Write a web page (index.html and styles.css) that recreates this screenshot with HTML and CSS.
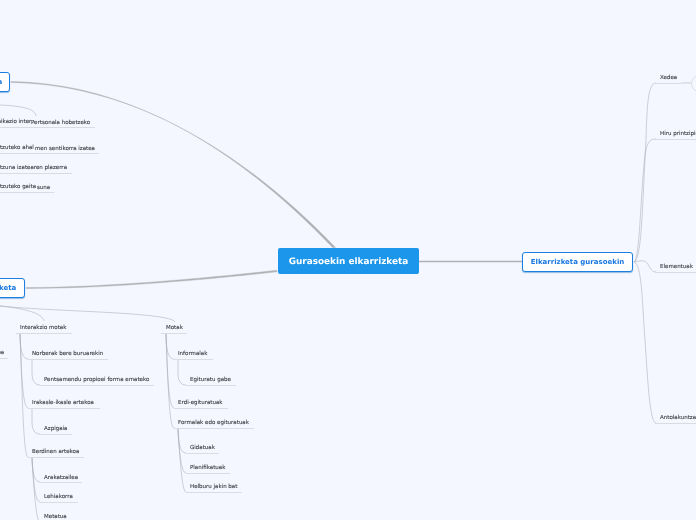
FILE: index.html
```html
<!DOCTYPE html>
<html lang="eu">
<head>
<meta charset="utf-8">
<title>Gurasoekin elkarrizketa</title>
<link rel="stylesheet" href="styles.css">
</head>
<body>
<main class="map">
<svg class="links" width="696" height="520" viewBox="0 0 696 520" aria-hidden="true">
  <g class="main-links">
    <path d="M332.500 247.500C260 172 150 83.500 11 81.500V82.500C150 84.600 262 171 335.500 247.500Z"/>
    <path d="M277 270.200C200 279 100 287.500 26 287.600V288.400C100 288.800 200 280.500 277 271.800Z"/>
    <path d="M419 260.900H522V262.100H419Z"/>
  </g>
  <g class="branches">
    <path d="M634 262C642 258 642 210 646 140C647 105 648 83 656 83"/>
    <path d="M634 262C640 258 640 200 645 155C647 143 649 139 656 139"/>
    <path d="M634 262C643 260 646 260 649 266C651 270 653 272 656 272"/>
    <path d="M634 262C642 265 642 300 645 340C648 385 650 423 656 423"/>
    <path d="M0 306C20 308 42 312 44 321"/>
    <path d="M0 306C60 312 170 312 175 322"/>
    <path d="M0 105C20 106 35 108 36 116"/>
    <path d="M20 333C20 345 21 359 28 359"/>
    <path d="M20 333C21 360 22 408 28 408"/>
    <path d="M20 333C22 380 23 457 28 457"/>
    <path d="M32 359V372C32 380 34 385 40 385"/>
    <path d="M32 408V421C32 429 34 434 40 434"/>
    <path d="M32 457C32 470 34 482 40 482"/>
    <path d="M32 457C33 480 35 502 40 502"/>
    <path d="M32 457C34 490 36 522 40 522"/>
    <path d="M166 333C166 345 167 359 174 359"/>
    <path d="M166 333C167 365 168 408 174 408"/>
    <path d="M166 333C168 380 169 428 174 428"/>
    <path d="M178 359V372C178 380 180 385 186 385"/>
    <path d="M178 428C178 442 180 453 186 453"/>
    <path d="M178 428C179 450 181 473 186 473"/>
    <path d="M178 428C180 460 182 492 186 492"/>
    <path d="M691 83H681"/>
  </g>
  <g class="rules">
    <path d="M0 127.500H95"/>
    <path d="M0 153.500H99"/>
    <path d="M0 173.500H72"/>
    <path d="M0 192.500H54"/>
    <path d="M0 358.500H8"/>
    <path d="M16 333.500H72"/>
    <path d="M28 359.500H108"/>
    <path d="M40 385.500H154"/>
    <path d="M28 408.500H100"/>
    <path d="M40 434.500H72"/>
    <path d="M28 457.500H84"/>
    <path d="M40 482.500H82"/>
    <path d="M40 502.500H78"/>
    <path d="M161 333.500H187"/>
    <path d="M174 359.500H213"/>
    <path d="M186 385.500H236"/>
    <path d="M174 408.500H228"/>
    <path d="M174 428.500H254"/>
    <path d="M186 453.500H219"/>
    <path d="M186 473.500H230"/>
    <path d="M186 492.500H242"/>
    <path d="M655 83.500H681"/>
    <path d="M655 139.500H696"/>
    <path d="M655 272.500H696"/>
    <path d="M655 423.500H696"/>
  </g>
  <circle class="fold" cx="700" cy="83.500" r="8.500"/>
</svg>

<div class="root">Gurasoekin elkarrizketa</div>
<div class="topic t-right">Elkarrizketa gurasoekin</div>
<div class="topic t-top">Komunikazioa</div>
<div class="topic t-bottom">Elkarrizketa</div>

<span class="lbl e1">Komunikazio inter</span>
<span class="lbl e2">Entzuteko ahal</span>
<span class="lbl e3">Entzuna izatearen plazerra</span>
<span class="lbl e4">Entzuteko gaita</span>
<span class="lbl e5">Bestelakoa</span>
<span class="lbl a1">Pertsonala hobetzeko</span>
<span class="lbl a2">men sentikorra izatea</span>
<span class="lbl a3">suna</span>

<span class="lbl b0">Interakzio motak</span>
<span class="lbl b1">Norberak bere buruarekin</span>
<span class="lbl b2">Pentsamendu propioei forma emateko</span>
<span class="lbl b3">Irakasle-ikasle artekoa</span>
<span class="lbl b4">Azpigaia</span>
<span class="lbl b5">Berdinen artekoa</span>
<span class="lbl b6">Arakatzailea</span>
<span class="lbl b7">Lehiakorra</span>
<span class="lbl b8">Metatua</span>

<span class="lbl c0">Motak</span>
<span class="lbl c1">Informalak</span>
<span class="lbl c2">Egituratu gabe</span>
<span class="lbl c3">Erdi-egituratuak</span>
<span class="lbl c4">Formalak edo egituratuak</span>
<span class="lbl c5">Gidatuak</span>
<span class="lbl c6">Planifikatuak</span>
<span class="lbl c7">Helburu jakin bat</span>

<span class="lbl d1">Xedea</span>
<span class="lbl d2">Hiru printzipio</span>
<span class="lbl d3">Elementuak</span>
<span class="lbl d4">Antolakuntza</span>
</main>
</body>
</html>
```
FILE: styles.css
```css
html, body { margin: 0; padding: 0; background: #f4f7ff; }
.map { position: relative; width: 696px; height: 520px; overflow: hidden; background: #f4f7ff; font-family: "DejaVu Sans", sans-serif; text-rendering: geometricPrecision; }
.links { position: absolute; left: 0; top: 0; }
.links path, .links circle { fill: none; }
.links .main-links path { fill: #b0b1b5; stroke: #b0b1b5; stroke-width: .4; }
.branches path { stroke: rgba(170,172,182,.55); stroke-width: 1; }
.rules path { stroke: #dadce4; stroke-width: 1; }
.fold { stroke: #dcdee4; stroke-width: 1; }

.root { position: absolute; left: 278px; top: 248px; width: 141px; height: 26px; box-sizing: border-box; padding-top: 3px; background: #1b96ea; border-radius: 2px; color: #fff; font-size: 8.900px; font-weight: 700; line-height: 23px; text-align: center; white-space: nowrap; will-change: transform; }

.topic { position: absolute; box-sizing: border-box; height: 20px; background: #fff; border: 1px solid #1a7fe0; border-radius: 3px; box-shadow: 0 1px 1px rgba(26,110,200,.45); color: #1877e0; font-size: 7px; font-weight: 700; line-height: 18px; white-space: nowrap; will-change: transform; }
.t-right { left: 522px; top: 252px; width: 111px; text-align: center; }
.t-top { right: 686px; top: 72px; padding: 0 7px; }
.t-bottom { right: 671px; top: 278px; padding: 0 8px; }

.lbl { position: absolute; font-size: 5.500px; line-height: 8px; color: #3a3a41; -webkit-text-stroke: .1px #3a3a41; white-space: nowrap; will-change: transform; }
.e1 { right: 665px; top: 118px; }
.e2 { right: 662px; top: 144px; }
.e3 { right: 629px; top: 164px; }
.e4 { right: 660px; top: 183px; }
.e5 { right: 692px; top: 349px; }
.a1 { left: 31px; top: 119px; }
.a2 { left: 35px; top: 145px; }
.a3 { left: 37px; top: 184px; }
.b0 { left: 20px; top: 324px; }
.b1 { left: 32px; top: 350px; }
.b2 { left: 44px; top: 376px; }
.b3 { left: 32px; top: 399px; }
.b4 { left: 44px; top: 425px; }
.b5 { left: 32px; top: 448px; }
.b6 { left: 44px; top: 474px; }
.b7 { left: 44px; top: 493px; }
.b8 { left: 44px; top: 513px; }
.c0 { left: 166px; top: 324px; }
.c1 { left: 178px; top: 350px; }
.c2 { left: 190px; top: 376px; }
.c3 { left: 178px; top: 399px; }
.c4 { left: 178px; top: 419px; }
.c5 { left: 190px; top: 444px; }
.c6 { left: 190px; top: 464px; }
.c7 { left: 190px; top: 483px; }
.d1 { left: 660px; top: 74px; }
.d2 { left: 660px; top: 130px; }
.d3 { left: 660px; top: 263px; }
.d4 { left: 660px; top: 414px; }
```
